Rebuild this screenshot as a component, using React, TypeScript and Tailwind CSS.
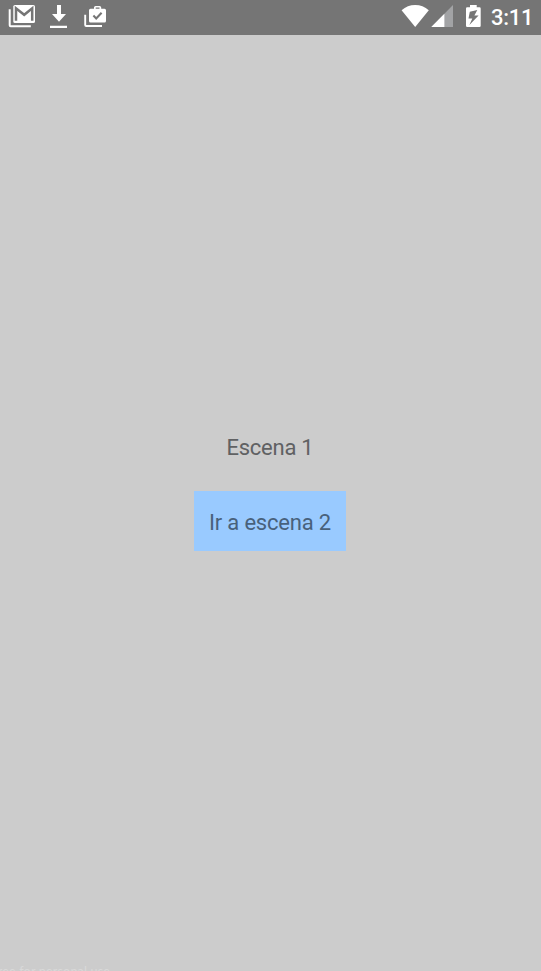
import React from "react";

function Notifications() {
  return (
    <svg width="110" height="35" viewBox="0 0 110 35" className="block">
      <rect x="13.3" y="5" width="21.7" height="18" rx="1.6" fill="#fff" />
      <path d="M16 20.7V8.3L24.2 14.8L32.2 8.3V20.7" fill="none" stroke="#757575" strokeWidth="2.5" />
      <path d="M9.7 9.3V25.2Q9.7 26.2 10.7 26.2H30.8" fill="none" stroke="#fff" strokeWidth="2" />
      <path d="M57 5H61V14H66L59 21.7L52 14H57ZM50 25.7H67V28H50Z" fill="#fff" />
      <path
        fillRule="evenodd"
        d="M94 8.7V7.6Q94 6 95.6 6H99.6Q101.2 6 101.2 7.6V8.7H104.5Q106 8.7 106 10.2V21Q106 22.6 104.4 22.6H90.6Q89 22.6 89 21V10.2Q89 8.7 90.5 8.7ZM95.7 8.7H99.5V7.6H95.7Z"
        fill="#fff"
      />
      <path d="M93.4 15.6L96.2 18.4L101.6 12.8" fill="none" stroke="#757575" strokeWidth="2.1" />
      <path d="M85.2 14.7V25Q85.2 26 86.2 26H102" fill="none" stroke="#fff" strokeWidth="1.9" />
    </svg>
  );
}

function SystemIcons() {
  return (
    <svg width="81" height="35" viewBox="401 0 81 35" className="block">
      <path d="M415.2 27L401.6 10.2Q407.5 5 415.2 5Q422.9 5 428.8 10.2Z" fill="#fff" />
      <path d="M431.3 27L453 5V27Z" fill="#a2a3a5" />
      <path d="M431.3 27L444.4 13.7V27Z" fill="#fff" />
      <path d="M470 5H476.7V7.2H479.5Q480.7 7.2 480.7 8.4V25.8Q480.7 27 479.5 27H467.2Q466 27 466 25.8V8.4Q466 7.2 467.2 7.2H470Z" fill="#fff" />
      <path d="M477.3 10L469.8 11.8L468.5 18.4H472.3L469.4 25L478.6 15.4H474.4Z" fill="#757575" />
    </svg>
  );
}

export default function App() {
  return (
    <div className="flex h-[971px] w-[541px] flex-col overflow-hidden bg-[#cccccc] font-[Roboto,sans-serif] text-[22px]">
      <header className="flex h-[35px] shrink-0 items-center justify-between bg-[#757575]">
        <Notifications />
        <div className="flex items-center">
          <SystemIcons />
          <span className="w-[59px] pl-[9px] font-medium leading-[35px] tracking-[-0.3px] whitespace-nowrap text-white">3:11</span>
        </div>
      </header>
      <main className="flex w-[540px] flex-1 flex-col items-center pt-[400px] tracking-[-0.25px]">
        <p className="h-[26px] leading-[26px] whitespace-nowrap text-[#606163]">Escena 1</p>
        <button className="mt-[30px] h-[60px] w-[152px] bg-[#99caff] pt-[2px] tracking-[-0.2px] whitespace-nowrap text-[#48617b]">
          Ir a escena 2
        </button>
      </main>
      <footer className="-ml-[9px] h-[7px] shrink-0 font-[Lato,sans-serif] text-[12.5px] leading-[16px] tracking-[0.2px] whitespace-nowrap text-[#d9d9d9]">
        Free for personal use
      </footer>
    </div>
  );
}
